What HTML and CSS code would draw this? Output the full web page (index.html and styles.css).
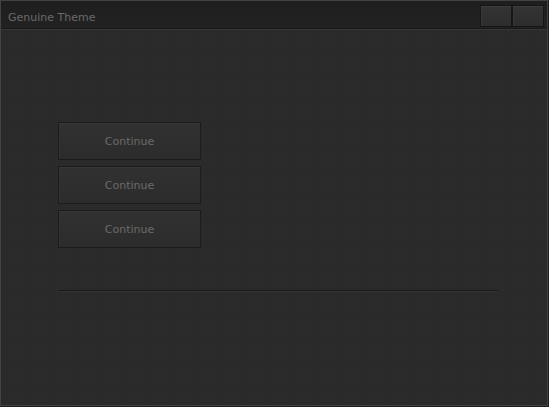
FILE: index.html
```html
<!DOCTYPE html>
<html>
<head>
<meta charset="utf-8">
<link rel="stylesheet" href="styles.css">
</head>
<body>
<div class="window">
  <div class="titlebar">
    <span class="title">Genuine Theme</span>
    <div class="title-buttons">
      <button class="tbtn" aria-label="Minimize"></button>
      <button class="tbtn" aria-label="Close"></button>
    </div>
  </div>
  <div class="content">
    <div class="stack">
      <button class="btn">Continue</button>
      <button class="btn">Continue</button>
      <button class="btn">Continue</button>
    </div>
    <div class="rule"></div>
  </div>
</div>
</body>
</html>
```
FILE: styles.css
```css
html, body {
  margin: 0;
  padding: 0;
}
body {
  width: 549px;
  height: 407px;
  background: #1c1c1c;
  font-family: "DejaVu Sans", Verdana, sans-serif;
  font-size: 11px;
  overflow: hidden;
}
.window {
  width: 546px;
  height: 404px;
  border: 1px solid #424242;
  background-color: #2a2a2a;
  background-image: radial-gradient(rgba(255,255,255,0.018) 1px, transparent 1px);
  background-size: 3px 3px;
  display: flex;
  flex-direction: column;
}
.titlebar {
  height: 27px;
  flex: none;
  display: flex;
  align-items: center;
  justify-content: space-between;
  background: linear-gradient(to bottom, #1e1e1e, #222222);
  border-bottom: 1px solid #171717;
  box-shadow: 0 1px 0 #383838;
  padding-left: 7px;
  padding-right: 3px;
}
.title {
  color: #6a6a6a;
  margin-top: 5px;
}
.title-buttons {
  display: flex;
  gap: 0;
  margin-top: 3px;
}
.tbtn {
  width: 32px;
  height: 22px;
  padding: 0;
  border: 1px solid #161616;
  background: linear-gradient(to bottom, #343434, #2d2d2d);
  box-shadow: inset 0 1px 0 #3c3c3c, inset 1px 0 0 #373737;
}
.content {
  flex: 1;
  padding: 93px 50px 0 57px;
  box-sizing: border-box;
}
.stack {
  display: flex;
  flex-direction: column;
  gap: 6px;
}
.btn {
  width: 143px;
  height: 38px;
  padding: 0;
  font-family: "DejaVu Sans", Verdana, sans-serif;
  font-size: 11px;
  color: #6b6b6b;
  border: 1px solid #1c1c1c;
  background: linear-gradient(to bottom, #313131, #2c2c2c);
  box-shadow: inset 0 1px 0 #373737, inset 1px 0 0 #333333;
}
.rule {
  margin-top: 42px;
  height: 1px;
  width: 440px;
  background: #1a1a1a;
  box-shadow: 0 1px 0 #333333;
}
```
